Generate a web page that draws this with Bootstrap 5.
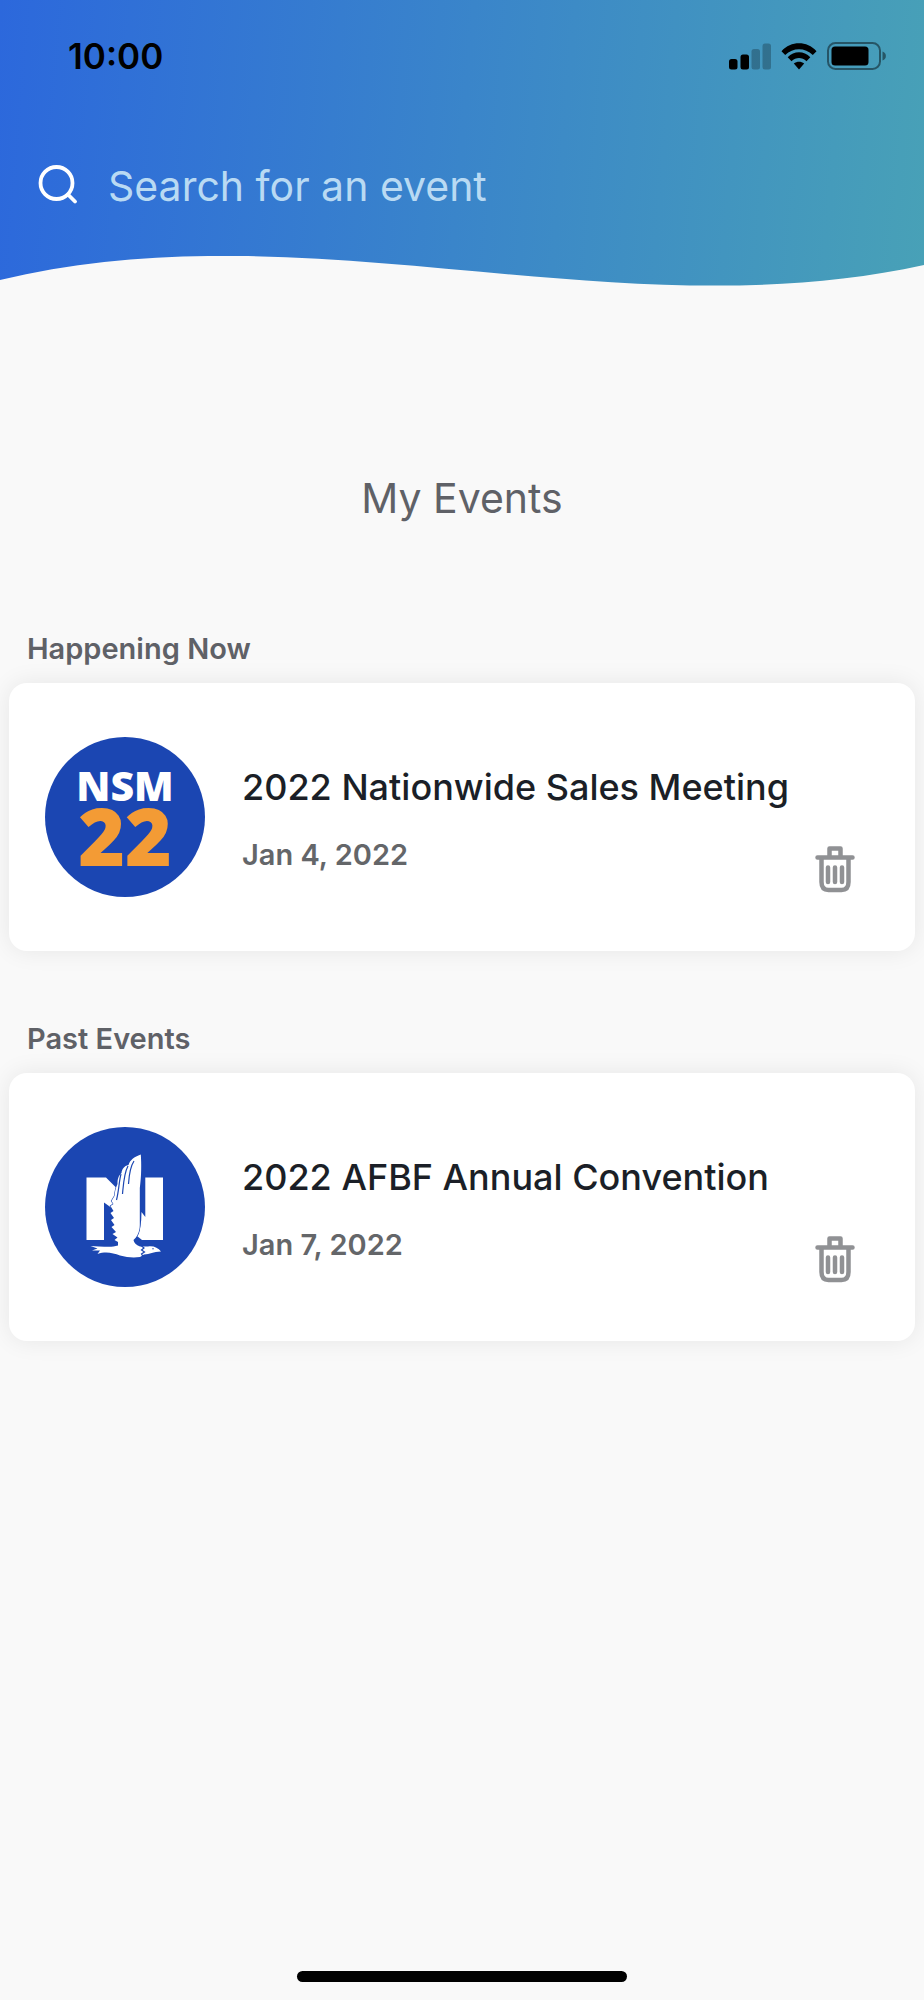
<!DOCTYPE html>
<html lang="en">
<head>
<meta charset="utf-8">
<meta name="viewport" content="width=device-width, initial-scale=1">
<title>My Events</title>
<link href="https://cdn.jsdelivr.net/npm/bootstrap@5.3.0/dist/css/bootstrap.min.css" rel="stylesheet">
<style>
  body { font-family: Inter, "Liberation Sans", sans-serif; background: #f9f9f9; color: #5f6167; }
  .hero { background: linear-gradient(95deg, #2c68dc 0%, #3a85ca 50%, #48a1b7 100%); }
  .status { height: 112px; padding: 0 37px 0 68px; color: #000; }
  .clock { font-size: 35px; line-height: 44px; font-weight: 600; }
  .status-icons { gap: 10px; }
  .search { height: 144px; padding: 44px 36px 0 38px; gap: 28px; }
  .search-box { font-size: 41px; line-height: 60px; min-width: 0; color: #fff; }
  .search-box:focus { outline: 0; }
  .search-box::placeholder { color: #b9daf3; opacity: 1; }
  .wave { height: 30px; }
  .page-title { font-size: 41px; line-height: 52px; padding: 186px 0 107px; }
  .section-title { font-size: 29px; line-height: 36px; font-weight: 600; padding: 0 27px; margin-bottom: 16px; }
  .event-card { border-radius: 18px; margin: 0 9px 70px; padding: 54px 60px 54px 36px;
    box-shadow: 0 0 24px rgba(0, 0, 0, .08); }
  .event-info { padding: 2px 0 0 37px; }
  .event-name { font-size: 36px; line-height: 48px; font-weight: 500; color: #1b1f27; margin-bottom: 26px; }
  .event-date { font-size: 29px; line-height: 36px; font-weight: 600; color: #646669; }
  .home-bar { width: 330px; height: 11px; margin-bottom: 18px; }
</style>
</head>
<body>
<div class="d-flex flex-column min-vh-100">
  <header class="hero">
    <div class="status d-flex align-items-center justify-content-between">
      <span class="clock">10:00</span>
      <div class="status-icons d-flex align-items-center">
        <svg width="42" height="27" viewBox="0 0 42 27" aria-hidden="true">
          <rect x="0" y="16" width="8.500" height="10.500" rx="2.500"/>
          <rect x="11.500" y="11.500" width="8.500" height="15" rx="2.500"/>
          <rect x="22.500" y="6" width="8.500" height="20.500" rx="2.500" opacity=".25"/>
          <rect x="33.500" y="0.500" width="8.500" height="26" rx="2.500" opacity=".25"/>
        </svg>
        <svg width="36" height="27" viewBox="0 0 36 27" aria-hidden="true">
          <path d="M.5 8.200C10-2.300 26-2.300 35.500 8.200L31.800 12C24 4.200 12 4.200 4.200 12Z"/>
          <path d="M6.700 14.300C13 7.700 23 7.700 29.300 14.300L25.500 18.200C21 14 15 14 10.500 18.200Z"/>
          <path d="M12.800 20.600C16 18.100 20 18.100 23.200 20.600L18 26.500Z"/>
        </svg>
        <svg width="60" height="28" viewBox="0 0 60 28" aria-hidden="true">
          <rect x="1" y="1" width="52" height="26" rx="7.500" fill="none" stroke="#000" stroke-opacity=".45" stroke-width="2"/>
          <rect x="4.500" y="4.500" width="37" height="19" rx="3.500"/>
          <path d="M55.500 9.500C60 11 60 17 55.500 18.500Z" opacity=".45"/>
        </svg>
      </div>
    </div>
    <form class="search d-flex align-items-start" role="search">
      <label class="flex-shrink-0" for="event-search" aria-label="Search for an event">
        <svg class="d-block" width="42" height="48" viewBox="0 -5 42 48" fill="none" stroke="#fff" stroke-width="3.800" stroke-linecap="round" aria-hidden="true">
          <circle cx="18.500" cy="22" r="16"/><path d="M30 33.500l7 7"/>
        </svg>
      </label>
      <input class="search-box flex-grow-1 bg-transparent border-0 p-0" id="event-search" type="text" placeholder="Search for an event">
    </form>
    <svg class="wave d-block w-100" viewBox="0 256 924 30" preserveAspectRatio="none" aria-hidden="true">
      <path d="M0 280C308 206 616 332.500 924 265V287H0Z" fill="#f9f9f9"/>
    </svg>
  </header>

  <main>
    <h1 class="page-title text-center fw-normal m-0">My Events</h1>

    <section>
      <h2 class="section-title">Happening Now</h2>
      <article class="event-card bg-white d-flex align-items-center">
        <svg class="flex-shrink-0" width="160" height="160" viewBox="0 0 160 160" role="img" aria-label="NSM 22">
          <circle cx="80" cy="80" r="80" fill="#1b46b2"/>
          <g font-family="'Open Sans', Inter, sans-serif" font-weight="800" text-anchor="middle">
            <text x="80" y="64" font-size="41" fill="#fff">NSM</text>
            <text x="80" y="129" font-size="80" fill="#f39b35">22</text>
          </g>
        </svg>
        <div class="event-info flex-grow-1">
          <h3 class="event-name">2022 Nationwide Sales Meeting</h3>
          <p class="event-date m-0">Jan 4, 2022</p>
        </div>
        <button class="btn border-0 p-0 align-self-end" type="button" aria-label="Remove 2022 Nationwide Sales Meeting">
          <svg class="d-block" width="40" height="52" viewBox="0 0 40 52" fill="none" stroke="#909194" stroke-width="4.500" stroke-linecap="round" stroke-linejoin="round">
            <path d="M2.500 12.500H37.500M14.500 11V3.500H25.500V11M6.500 13V37Q6.500 45 13.500 45H26.500Q33.500 45 33.500 37V13M13 22.500V37M20 22.500V37M27 22.500V37"/>
          </svg>
        </button>
      </article>
    </section>

    <section>
      <h2 class="section-title">Past Events</h2>
      <article class="event-card bg-white d-flex align-items-center">
        <svg class="flex-shrink-0" width="160" height="160" viewBox="15 17 160 160" role="img" aria-label="Nationwide">
          <circle cx="95" cy="97" r="80" fill="#1b46b2"/>
          <g fill="#fff">
            <path d="M56.500 67.500H76L86 77.500V101L74 92.500V130H56.500Z"/>
            <path d="M115.300 67.500H133V130H112L107 126Q111.500 119 111.500 102L115.300 107Z"/>
            <path stroke="#1b46b2" stroke-width="1.200" paint-order="stroke" d="M110.800 44.500C104 47 100 50 98.500 55 94 56 92 59 91.500 63 88 66 87.500 70 87.500 74 85.500 78 85 82 84.500 86L81.500 91 83.500 94 80.500 96 83.500 101 80.500 103 84 108 81 110 84.500 115 81.500 117 86 122 82.500 124 87.500 127.500 84.500 130 88 132 88 135.500C82 137.500 76 136.500 69 136.500L60.500 136 67.500 138.500 62 140.500 70 140.500 67.500 144C76 141 83 143 90 145.500 97 147.500 104 148 110 147L114 144.500C120 144.500 123 141.500 131 141.500 128 137.500 123 135.500 118 136.500L110 136.500C106 135 104 133 103.500 130 107 127 109.800 122 109.800 115V78C111.500 66 111.500 54 110.800 44.500Z"/>
          </g>
          <path d="M104 51C100 57 99 66 98.500 74M98 56C94 63 93.500 73 92.500 84M91 64C89 71 89 80 86.500 90" fill="none" stroke="#1b46b2" stroke-width="1.200"/>
          <path d="M111 135.500L114 138 111.500 140 114.500 142 111.500 144 113 146.500" fill="none" stroke="#1b46b2" stroke-width="1.200"/>
          <circle cx="123" cy="138.800" r=".7" fill="#1b46b2"/>
        </svg>
        <div class="event-info flex-grow-1">
          <h3 class="event-name">2022 AFBF Annual Convention</h3>
          <p class="event-date m-0">Jan 7, 2022</p>
        </div>
        <button class="btn border-0 p-0 align-self-end" type="button" aria-label="Remove 2022 AFBF Annual Convention">
          <svg class="d-block" width="40" height="52" viewBox="0 0 40 52" fill="none" stroke="#909194" stroke-width="4.500" stroke-linecap="round" stroke-linejoin="round">
            <path d="M2.500 12.500H37.500M14.500 11V3.500H25.500V11M6.500 13V37Q6.500 45 13.500 45H26.500Q33.500 45 33.500 37V13M13 22.500V37M20 22.500V37M27 22.500V37"/>
          </svg>
        </button>
      </article>
    </section>
  </main>

  <footer class="mt-auto"><div class="home-bar bg-black rounded-pill mx-auto"></div></footer>
</div>
<script src="https://cdn.jsdelivr.net/npm/bootstrap@5.3.0/dist/js/bootstrap.bundle.min.js"></script>
</body>
</html>
